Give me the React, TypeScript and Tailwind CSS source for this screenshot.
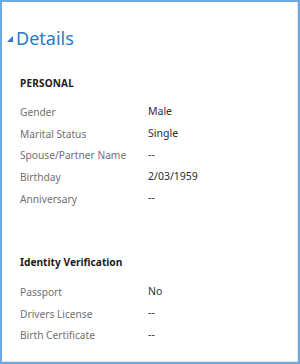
const personal = [
  { label: "Gender", value: "Male" },
  { label: "Marital Status", value: "Single" },
  { label: "Spouse/Partner Name", value: "--" },
  { label: "Birthday", value: "2/03/1959" },
  { label: "Anniversary", value: "--" },
];

const identity = [
  { label: "Passport", value: "No" },
  { label: "Drivers License", value: "--" },
  { label: "Birth Certificate", value: "--" },
];

function Row({ label, value }: { label: string; value: string }) {
  return (
    <div className="flex h-[21.6px] items-center text-[10.2px]">
      <span className="w-[128px] shrink-0 overflow-hidden whitespace-nowrap text-[#707070]">
        {label}
      </span>
      <span className="-mt-[2px] text-[10.5px] text-[#2e2e2e]">{value}</span>
    </div>
  );
}

function App() {
  return (
    <div
      className="h-[364px] w-[300px] border-2 border-[#70a7df] bg-white"
      style={{ fontFamily: '"Noto Sans", "Open Sans", sans-serif' }}
    >
      <div className="h-full w-full border-b border-r border-[#e6e6e6]">
        {/* header */}
        <div className="flex items-center pl-[5px] pt-[22px]">
          <svg width="6" height="6" viewBox="0 0 6 6" className="mr-[3px] mt-[2px]">
            <polygon points="6,0 6,6 0,6" fill="#2a78c8" />
          </svg>
          <span className="text-[18px] leading-[28px] text-[#2a78c8]">Details</span>
        </div>

        {/* personal */}
        <div className="pl-[18px] pt-[24px]">
          <div className="text-[10px] font-bold leading-[14px] tracking-[0.2px] text-[#1a1a1a]">
            PERSONAL
          </div>
          <div className="mt-[12px] flex flex-col">
            {personal.map((r) => (
              <Row key={r.label} {...r} />
            ))}
          </div>
        </div>

        {/* identity */}
        <div className="pl-[18px] pt-[45px]">
          <div className="text-[10.2px] font-bold leading-[14px] text-[#1a1a1a]">
            Identity Verification
          </div>
          <div className="mt-[13px] flex flex-col">
            {identity.map((r) => (
              <Row key={r.label} {...r} />
            ))}
          </div>
        </div>
      </div>
    </div>
  );
}

export default App;
